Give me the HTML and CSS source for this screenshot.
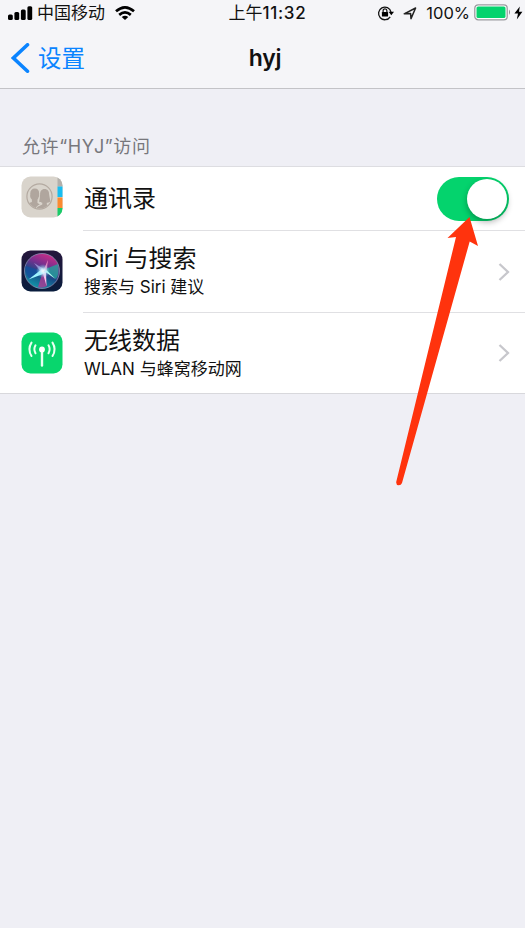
FILE: index.html
```html
<!DOCTYPE html>
<html lang="zh-CN">
<head>
<meta charset="utf-8">
<title>hyj</title>
<link rel="stylesheet" href="styles.css">
</head>
<body>
<div class="screen">
  <header class="top">
    <div class="status">
      <div class="status-left">
        <svg class="signal" width="25" height="15" viewBox="0 0 25 15"><rect x="0" y="8.5" width="4.8" height="5.5" rx="1.5"/><rect x="6.4" y="6" width="4.8" height="8" rx="1.5"/><rect x="12.9" y="3.5" width="4.8" height="10.5" rx="1.5"/><rect x="19.4" y="0.3" width="4.8" height="13.7" rx="1.5"/></svg>
        <span class="carrier">中国移动</span>
        <svg class="wifi" width="20" height="14" viewBox="0 0 20 14"><g fill="none" stroke="#000" stroke-width="2.7"><path d="M1 5.3Q10-2.5 19 5.3"/><path d="M4.2 8.9Q10 4 15.8 8.9"/></g><path d="M6.7 11Q10 8.3 13.3 11L10 14Z"/></svg>
      </div>
      <div class="clock"><span>上午</span>11:32</div>
      <div class="status-right">
        <svg class="lock" width="18" height="16" viewBox="0 0 18 16"><path d="M13.2 11.8A6.3 6.3 0 1 1 14 7" fill="none" stroke="#111" stroke-width="1.3"/><path d="M11.6 6.8H17L14.3 10.2Z"/><rect x="4.9" y="7" width="6.2" height="4.6" rx=".6"/><path d="M6.1 7V5.7a1.9 1.9 0 0 1 3.8 0V7" fill="none" stroke="#111" stroke-width="1.2"/></svg>
        <svg class="location" width="14" height="13" viewBox="0 0 14 13"><path d="M1.2 6.8 12.6 1 8 11.6 7.6 6.6Z" fill="none" stroke="#222" stroke-width="1.5" stroke-linejoin="round"/></svg>
        <span class="percent">100%</span>
        <svg class="battery" width="38" height="17" viewBox="0 0 38 17"><rect x=".8" y=".8" width="32.4" height="15" rx="3.4" fill="#fff" stroke="#9b9b9f" stroke-width="1.3"/><rect x="2.5" y="2.5" width="29" height="11.6" rx="1.6" fill="#04d36d"/><path d="M35 5.6q2 2.7 0 5.4Z" fill="#8e8e92"/></svg>
        <svg class="bolt" width="9" height="14" viewBox="0 0 9 14"><path d="M5.8 .5 .4 7.5H4L2.800 13.500 8.400 5.800H5Z"/></svg>
      </div>
    </div>
    <nav class="nav">
      <a class="back"><svg width="19" height="30" viewBox="0 0 19 30"><path d="M16.5 1.8 2.4 15 16.5 28.2" fill="none" stroke="#0a84ff" stroke-width="3.6" stroke-linecap="round"/></svg><span>设置</span></a>
      <h1>hyj</h1>
    </nav>
  </header>
  <div class="section-label">允许“HYJ”访问</div>
  <main class="list">
    <div class="row row-short">
      <svg class="icon" width="42" height="42" viewBox="0 0 42 42">
        <defs><clipPath id="tile"><rect x=".5" y=".5" width="41" height="41" rx="9"/></clipPath><clipPath id="disc"><circle cx="18.5" cy="20.5" r="12"/></clipPath></defs>
        <g clip-path="url(#tile)"><path fill="#d9d4cc" d="M0 0h42v42H0z"/><path fill="#b3b0ab" d="M36.500 0h5.500v10.500h-5.500z"/><path fill="#19bdf0" d="M36.500 10.500h5.500V21h-5.500z"/><path fill="#fb8b32" d="M36.500 21.500h5.500V32h-5.500z"/><path fill="#1acb69" d="M36.500 32h5.500v10h-5.500z"/></g>
        <circle cx="18.5" cy="20.5" r="12.6" fill="none" stroke="#b4aaa1" stroke-width="1.2"/>
        <g clip-path="url(#disc)" fill="#b0a69e"><path d="M23.500 13c3.300 0 4.700 2.300 4.600 5.500l1.300 7c-1.200 1-2.600 1.200-3.600 1.200v1.800l4.700 2.500v6H16v-6l5.300-2.500v-1.800c-1.200 0-2.400-.4-3.200-1.200l1-7c0-3.200 1.400-5.500 4.400-5.500Z"/><path d="M13.700 12.500c3.300 0 4.800 2.500 4.400 5.800.4 2.400-.6 4.200-1.600 5.300v3.300l2.600 1.500c-2.200 1.200-3.800 2.800-4.100 5.600H4v-5.500l6.900-2.600v-2.300c-1.200-1.200-2.100-3-1.600-5.100-.4-3.500 1.400-6 4.400-6Z"/><path d="M18.300 20.500 17.300 26.500 19.500 28.300Q15.500 29.800 14.800 33" fill="none" stroke="#d9d4cc" stroke-width=".8"/></g>
      </svg>
      <div class="text"><div class="title">通讯录</div></div>
      <div class="switch"><div class="knob"></div></div>
    </div>
    <div class="row row-middle">
      <svg class="icon" width="42" height="42" viewBox="0 0 42 42">
        <defs>
          <linearGradient id="night" x1="0" y1="0" x2="0" y2="1"><stop offset="0" stop-color="#25163c"/><stop offset="1" stop-color="#081c3c"/></linearGradient>
          <linearGradient id="orb" x1=".7" y1="0" x2=".3" y2="1"><stop offset="0" stop-color="#d02b86"/><stop offset=".32" stop-color="#79308f"/><stop offset=".6" stop-color="#174a86"/><stop offset="1" stop-color="#129cab"/></linearGradient>
          <radialGradient id="glow"><stop offset="0" stop-color="#fff"/><stop offset=".3" stop-color="#cff5ff" stop-opacity=".85"/><stop offset="1" stop-color="#7ce" stop-opacity="0"/></radialGradient>
        </defs>
        <rect x=".5" y=".5" width="41" height="41" rx="9" fill="url(#night)"/>
        <circle cx="21" cy="21" r="17.500" fill="url(#orb)" stroke="#898fb5" stroke-width=".8"/>
        <path d="M21 21 4.500 16Q5 27 9 29Z" fill="#14509d" opacity=".8"/><path d="M22 20 37 14Q39 23 35 29Z" fill="#1faa9d" opacity=".75"/><path d="M22 21 26 36Q21 39 17 37Z" fill="#b83693" opacity=".75"/>
        <path d="M21 19 7.500 29.500 22 24Z" fill="#9ff5ff"/><path d="M23 21 34.500 29 25 19.500Z" fill="#b2fff1"/><path d="M21.500 22 25.500 36 25 22Z" fill="#ffc3ee"/><path d="M22 21 27 10 25.500 21Z" fill="#ff9dcb" opacity=".8"/><path d="M13 13 23 19 20 22Z" fill="#b3b0ef" opacity=".65"/>
        <circle cx="22" cy="21" r="7" fill="url(#glow)"/>
      </svg>
      <div class="text"><div class="title"><span class="latin">Siri</span> 与搜索</div><div class="sub">搜索与 Siri 建议</div></div>
      <div class="more"><svg width="12" height="18" viewBox="0 0 12 18"><path d="m1.500 1 8.500 8-8.500 8" fill="none" stroke="#c7c7cc" stroke-width="2.300"/></svg></div>
    </div>
    <div class="row row-last">
      <svg class="icon" width="42" height="42" viewBox="0 0 42 42">
        <rect x=".5" y=".5" width="41" height="41" rx="9" fill="#08d66d"/>
        <g fill="none" stroke="#e9fff2" stroke-width="2" stroke-linecap="round"><path d="M21 18v15.500" stroke-width="2.400"/><path d="M14.500 13.300q-2.300 4 0 8M10.500 10.600q-4.200 6.700 0 13.400"/><path d="M27.500 13.300q2.300 4 0 8M31.500 10.600q4.200 6.700 0 13.400"/></g><circle cx="21" cy="17.500" r="2.900" fill="#fff"/>
      </svg>
      <div class="text"><div class="title">无线数据</div><div class="sub">WLAN 与蜂窝移动网</div></div>
      <div class="more"><svg width="12" height="18" viewBox="0 0 12 18"><path d="m1.500 1 8.500 8-8.500 8" fill="none" stroke="#c7c7cc" stroke-width="2.300"/></svg></div>
    </div>
  </main>
  <svg class="pointer" width="90" height="275" viewBox="390 215 90 275"><path d="M469.500 217 447.500 238 456 237 396.200 482Q396 485 398.700 485.200 401 485.300 402 483L469.700 241.500 478 246Z" fill="#ff330d"/></svg>
</div>
</body>
</html>
```
FILE: styles.css
```css
* { box-sizing: border-box; }
body { margin: 0; background: #efeff5; color: #111; font-family: Inter, "Noto Sans CJK SC", sans-serif; }
svg { display: block; flex: none; }
.screen { position: relative; width: 525px; height: 928px; overflow: hidden; background: #efeff5; }
.top { height: 89px; background: #f5f5f8; border-bottom: 1px solid #c3c3c7; }
.status { display: grid; grid-template-columns: 1fr 80px 1fr; height: 26px; align-items: center; font-size: 17px; line-height: 26px; white-space: nowrap; }
.status-left, .status-right { display: flex; align-items: center; }
.status-left { padding-left: 8px; }
.signal { margin-right: 4px; }
.wifi { margin-left: 10px; }
.clock { padding-left: 6px; font-weight: 500; letter-spacing: .7px; }
.clock span { font-weight: 400; letter-spacing: 0; }
.status-right { justify-content: flex-end; padding-right: 2px; }
.location { margin: 0 9px 0 8px; }
.percent { margin-right: 4px; font-size: 16.5px; }
.battery { margin-top: -1px; }
.bolt { margin-left: 2px; }
.nav { display: grid; grid-template-columns: 1fr auto 1fr; height: 63px; align-items: center; }
.back { display: flex; align-items: center; gap: 8px; padding-left: 11px; color: #0a84ff; font-size: 23.5px; line-height: 34px; }
.back span { padding-top: 2px; }
h1 { margin: 0; padding-left: 5px; font-size: 23px; font-weight: 600; line-height: 34px; letter-spacing: -.3px; }
.section-label { height: 77px; padding: 45px 0 0 22px; font-size: 18px; line-height: 26px; letter-spacing: .6px; color: #77777c; }
.list { background: #fff; border-top: 1px solid #dddde1; border-bottom: 1px solid #d8d8dc; }
.row { display: flex; align-items: center; height: 82px; padding-left: 21px; }
.row-short { height: 64px; }
.row-last { height: 80px; }
.icon { margin-bottom: 1px; }
.row-short .icon { margin-bottom: 4px; }
.row-middle .icon { margin-bottom: 2px; }
.text { display: flex; flex: 1; flex-direction: column; justify-content: center; height: 100%; margin-left: 20px; padding-left: 1px; border-bottom: 1px solid #e0e0e3; }
.row-middle .text { padding-bottom: 1px; }
.row-last .text, .row-last .more { border-bottom: 0; }
.title { font-size: 24px; line-height: 32px; }
.latin { letter-spacing: -.7px; }
.row-short .title { padding-top: 1px; }
.sub { font-size: 17px; line-height: 25px; }
.switch { display: flex; justify-content: flex-end; align-items: center; align-self: stretch; width: 88px; padding-right: 16px; border-bottom: 1px solid #e0e0e3; }
.switch::before { content: ""; width: 72px; height: 44px; flex: none; border-radius: 22px; background: #04d36d; }
.knob { flex: none; width: 40px; height: 40px; margin-left: -42px; margin-right: 2px; border-radius: 50%; background: #fff; box-shadow: 0 3px 6px rgba(0, 0, 0, .3); }
.more { display: flex; align-items: center; justify-content: flex-end; align-self: stretch; width: 30px; padding-right: 15px; border-bottom: 1px solid #e0e0e3; }
.pointer { position: absolute; left: 390px; top: 215px; }
```
